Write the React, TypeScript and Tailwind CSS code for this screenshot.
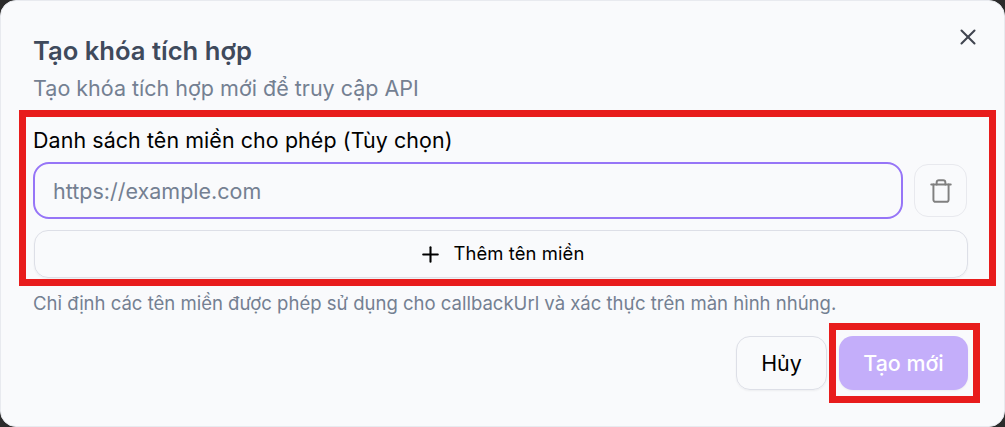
import { Plus, Trash, X } from 'lucide-react';

export default function App() {
  return (
    <div className="h-[427px] w-[1005px] overflow-hidden bg-[#2b2b2b] font-['Inter',sans-serif]">
      <div className="relative h-[427px] rounded-[16px] border border-[#e8eaef] bg-[#f9fafc] pl-[32px] pr-[36px] pt-[32px]">
        <button className="absolute right-[23px] top-[23px] text-[#404550]">
          <X className="h-[26px] w-[26px]" strokeWidth={1.9} />
        </button>

        {/* Header */}
        <h2 className="text-[25.6px] font-semibold leading-[36px] text-[#3f4a5c]">Tạo khóa tích hợp</h2>
        <p className="mt-[5px] text-[21.5px] leading-[28px] text-[#748092]">Tạo khóa tích hợp mới để truy cập API</p>

        {/* Domains */}
        <div className="mt-[23px]">
          <label className="block text-[21.4px] font-normal leading-[30px] tracking-[0.1px] text-black">
            Danh sách tên miền cho phép (Tùy chọn)
          </label>
          <div className="mt-[7px] flex items-center gap-[11px]">
            <input
              readOnly
              placeholder="https://example.com"
              className="h-[57px] min-w-0 flex-1 rounded-[16px] border-2 border-[#9675f7] bg-transparent px-[18px] text-[21.5px] outline-none placeholder:text-[#748092]"
            />
            <button className="mr-px flex h-[53px] w-[53px] shrink-0 items-center justify-center rounded-[14px] border border-[#e8e9ee] text-[#808080]">
              <Trash className="h-[26px] w-[26px]" strokeWidth={1.8} />
            </button>
          </div>
          <button className="ml-px mt-[11px] flex h-[48px] w-[934px] items-center justify-center gap-[11px] rounded-[14px] border border-[#dddfe7] text-[18.4px] font-normal tracking-[0.1px] text-black shadow-xs">
            <Plus className="h-[25px] w-[25px]" strokeWidth={2} />
            Thêm tên miền
          </button>
          <p className="mt-[13px] text-[18.52px] leading-[24px] text-[#748092]">
            Chỉ định các tên miền được phép sử dụng cho callbackUrl và xác thực trên màn hình nhúng.
          </p>
        </div>

        {/* Actions */}
        <div className="mt-[21px] flex justify-end gap-[12px]">
          <button className="h-[54px] w-[91px] rounded-[14px] border border-[#dddfe7] text-[21.4px] font-normal text-black shadow-xs">
            Hủy
          </button>
          <button className="h-[54px] w-[129px] rounded-[14px] bg-[#c4aefa] text-[21.4px] font-medium text-white shadow-xs">
            Tạo mới
          </button>
        </div>

        {/* Red annotation frames */}
        <div className="pointer-events-none absolute left-[18px] top-[109px] h-[176px] w-[977px] border-[7px] border-[#e81c1c]" />
        <div className="pointer-events-none absolute left-[828px] top-[322px] h-[80px] w-[151px] border-[7px] border-[#e81c1c]" />
      </div>
    </div>
  );
}
